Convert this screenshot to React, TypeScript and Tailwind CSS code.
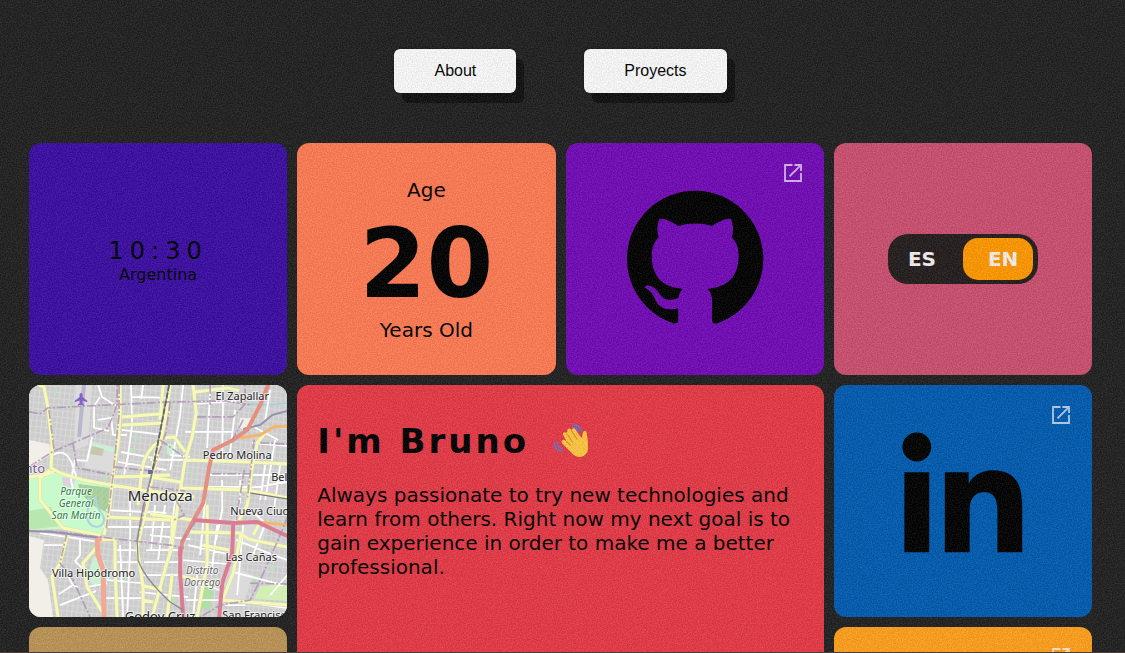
import type { ReactNode } from "react";
import { BiLogoGithub, BiLogoLinkedin } from "react-icons/bi";

function OpenIcon() {
  return (
    <svg
      aria-hidden="true"
      viewBox="0 0 18 18"
      className="absolute top-[21px] right-[22px] size-[18px] opacity-70"
      fill="none"
      stroke="#fff"
      strokeWidth="1.8"
    >
      <path d="M8.5 1H1v16h16V9M10.5 1H17v6M16.6 1.4L5.5 12.3" />
    </svg>
  );
}

function Card({ className, children }: { className: string; children?: ReactNode }) {
  return <section className={`relative overflow-hidden rounded-xl ${className}`}>{children}</section>;
}

function Grain() {
  return (
    <svg aria-hidden="true" className="pointer-events-none absolute inset-0 size-full opacity-[0.07]">
      <filter id="grain" x="0" y="0" width="100%" height="100%" colorInterpolationFilters="sRGB">
        <feTurbulence type="fractalNoise" baseFrequency="0.8" numOctaves="3" stitchTiles="stitch" />
        <feColorMatrix values="2.6 0 0 0 -0.85  2.6 0 0 0 -0.85  2.6 0 0 0 -0.85  0 0 0 0 1" />
      </filter>
      <rect width="100%" height="100%" filter="url(#grain)" />
    </svg>
  );
}

function WavingHand() {
  return (
    <svg role="img" aria-label="Waving hand" viewBox="0 0 36 36" className="size-9">
      <path
        d="M20.500 1.500q6 .2 8 7.500M20 4.200q4 .2 5.400 4.600M1.200 19.500q.3 7.500 7.600 8.600M4 20q.5 4.600 5.300 5.400"
        fill="none"
        stroke="#4a82ee"
        strokeWidth="1.3"
        strokeLinecap="round"
      />
      <path
        d="M9 17.500c1-1.300 2.600-1 3.400 0l1.400 1.400-3.600-6.800c-1.100-2.300 1.600-3.900 3-2L14.500 8c-.9-2.300 2-3.600 3.300-1.600l1 1.500c-.8-2.400 2.300-3.700 3.500-1.600l4.800 7 2.100 1.800c.1-2.200.1-4.400.9-5.900.8-1.700 3.300-1.300 3.600.5.3 2.500.6 4.500 1.100 7.800l.2 8.300c-.1 4.600-4.200 8.600-9 8.200-3.200-.2-5.200-1.800-7.500-4.200l-9.200-9.400c-.7-1-.9-2-.3-2.900z"
        fill="#fdc840"
      />
      <path
        d="M13.800 18.800l3.600 3.600M13.800 10.800l6 8.400M18.600 8l5.300 7.900"
        fill="none"
        stroke="#e09320"
        strokeWidth="1.100"
        strokeLinecap="round"
      />
    </svg>
  );
}

const whiteStreets = [
  "M98 385l4 12 16 10M100 397l-6 9v22l15 3M98 420l13-2 2 17h14M92 437l-5 24-12-1",
  "M53 455q14-8 20 12l4 12M75 460l-4 20 3 14M131 385l1 40-4 30-4 20M122 430l40 5M121 452l42 8M118 462l48 8",
  "M183 385l-3 30-10 55M210 388l-3 60M223 385l-1 75M235 410l-6 50M185 432h48M170 455l20 2M196 404l40-3",
  "M150 460h35M222 480v30l-6 30M207 487h40M240 480v20l-5 22M210 475h74M265 465l-5 35M275 440l-10 60M280 465l-7 50",
  "M155 505l-4 45M165 505l-7 55M175 500l-7 60M150 535l40 4M146 550h34M144 562h36M142 575h36M140 592l48 5",
  "M115 550h24M117 562h20M120 545l3 72M130 500v50l-3 67M106 510l60 3M103 527h68M107 580l36 3M105 598h38M87 587l20-4",
  "M40 533l35 5 24 4M80 540v15l-5 6 8 8M63 567l10 18 5 2M73 585l-14 9M60 605l36-14M44 545h23",
  "M188 545l44 10M183 560l46 4M205 500l-5 55M217 525l-6 50M243 525l-6 70M236 540l30 12 21 8M233 572l50 13M250 510l14 12",
  "M190 580l30 10M186 600h34M197 575l-4 42M245 602l42 6M270 595l17-20M265 524l-12 30M225 605h20",
  "M132 397l35 1M143 385l-2 14M270 390l-5 30M248 424l30 16M252 443l35 3M287 482l-38 6",
];

const yellowRoads = [
  "M36 384l8 3 4 21 4 35-1 25 9 5 23 7 27 5 20 3 38 7",
  "M120 385v28l-2 30-5 30-3 32-6 30",
  "M122 417l48-4M122 425l42-2M112 477l58-2",
  "M163 385l-3 35M170 437q-16 0-18 40l-5 28-10 42 6 40v30",
  "M157 443q-15 12-16 34l-3 28",
  "M170 385l-5 35-11 50",
  "M193 385l3 28-4 24-7 23-8 50-6 40-5 15-14 52",
  "M195 392l32-4 12 3M165 438l9-1 11 15M185 460l65 2 37 2",
  "M150 477l30 5M180 488l67 2 40 8M150 491l44 6",
  "M265 433l-8 10-5 24-5 38-8 15",
  "M108 517l62 3M150 514l43 6M29 477l15-2 10-3M50 470l-10 8v22l23 28 37 7",
  "M68 533l-8 30-8 14 6 40M97 547l-14 16 4 24 16 26M98 540l17-1v30l2 48",
  "M190 532l50 1 8 6 39 8M202 545l27 5M207 505v58l-10 54M241 533l-8 40-14 35",
  "M172 517v20M180 576l36 8M144 586l18 4M142 600l11 2M222 600l65 5M172 575l-5 42",
  "M260 522l-7 13",
];

const boundaries = [
  "M29 412l11 2 8-6 122-6 55-1 25 4",
  "M29 467l23-15 21-9 35-15 9-23v-20",
  "M73 443l4 25 35 7M114 467l46 5M150 487l35 4",
  "M49 410l5 40M119 385v30l-6 60-7 55M210 385v20M197 417h36l12-13v-19M243 420l-11 20M160 440l25 18",
  "M29 531h24l47 6 70 8 14 3M67 533l-7 30 13 17 17 37",
  "M176 500l8 15-10 5M195 522l-15 21M212 474h40M244 470l-8 50M254 440l-7 60M260 443l27 1",
  "M288 515l-8 20-20 45-10 20-30 5-20 12M250 583l37 1M170 402l-4 30-14 40-15 70",
];

function Roads({ paths, color, width }: { paths: string[]; color: string; width: number }) {
  return <path d={paths.join("")} fill="none" stroke={color} strokeWidth={width} strokeLinejoin="round" />;
}

function CityMap() {
  return (
    <svg
      role="img"
      aria-label="Map of Mendoza"
      viewBox="29 385 258 232"
      preserveAspectRatio="xMidYMid slice"
      className="absolute inset-0 size-full"
    >
      <defs>
        <pattern id="blocks" width="5" height="6" patternUnits="userSpaceOnUse" patternTransform="rotate(6)">
          <rect width="5" height="6" fill="#cdcccc" />
          <path d="M0 .5h5M.5 0v6" stroke="#dad9d9" />
        </pattern>
        <pattern id="woods" width="6" height="6" patternUnits="userSpaceOnUse">
          <rect width="6" height="6" fill="#add19e" />
          <path d="M1 1h1M4 3h1M2 5h1" stroke="#8fbf85" />
        </pattern>
      </defs>
      <path d="M29 385h258v232H29z" fill="url(#blocks)" />
      <path d="M29 440l20 4 3 10-23 14zM29 536l15 4-4 28 8 12 5 37H29zM240 418h16l-12 12-6-3z" fill="#f2efe9" />
      <path d="M76 385h16l-4 60-14 5zM91 441l27 7-4 25-30-6z" fill="#dddcdd" />
      <path d="M29 478l14-3 17-3 52 13-3 22-7 28-40-6-33 1z" fill="#c8facc" />
      <path d="M78 484l33 4-3 25-14-7-13-12z" fill="url(#woods)" />
      <path d="M29 511l22-4 9 19-31 4z" fill="#b8e8b0" />
      <path d="M91 443l26 6v4l-27-6zM166 443l10 2 3 12-12-3zM94 556l10 5 5 19-16 6-6-10z" fill="#c8f2d1" />
      <path d="M92 446l12 3-2 7-12-2z" fill="#c8c7ad" />
      <path d="M62 477l14 2-5 9-8-3zM151 459l10 2-2 17h-9zM256 481l20 9-2 9-20-3z" fill="#ddd1df" />
      <path d="M260 586l27-2v17l-33-2z" fill="#d3efb5" />
      <path d="M204 587l9 2-3 21-9-2z" fill="#aedfa3" />
      <path d="M246 522l20 7-5 19-27-5zM231 566l22 9-8 24-22 1z" fill="#dcdbdc" />
      <path
        d="M54 391h3M72 407h2M103 479h3M130 450h4M136 438h3M178 425h2M190 472h3M205 482h4M252 475h3M90 547h4M125 580h4M170 600h6M163 520h6M252 578h6M270 569h4"
        stroke="#b6e6b8"
        strokeWidth="4"
      />
      <path d="M84 385l-5 52" stroke="#b9b8cb" strokeWidth="4" />
      <path
        d="M89 497c1 10-6 21 2 28 10 5 16-3 11-11-4-6-7-10-6-18"
        fill="none"
        stroke="#aad3df"
        strokeWidth="2"
      />
      <path d="M247 404l20 1 20-2" stroke="#9fd0dc" fill="none" strokeWidth="1.500" />
      <Roads paths={whiteStreets} color="#ffffff" width={1.8} />
      <Roads paths={yellowRoads} color="#d8dca0" width={3.8} />
      <Roads paths={yellowRoads} color="#f6f9ba" width={3} />
      <Roads paths={["M240 438l20-3 13-8 14-1M257 522l30 3"]} color="#f3b66f" width={3} />
      <Roads paths={["M243 429l17-4 12-10 15-4", "M29 531l24 1 47 6"]} color="#9492ae" width={2} />
      <Roads
        paths={["M268 385l-8 20-13 25-14 10-20 10-4 17-6 36-10 18-11 21-2 14"]}
        color="#e58f80"
        width={4}
      />
      <Roads paths={["M101 538l-4 3 1 14 5 15 1 47"]} color="#f3a795" width={5} />
      <Roads
        paths={["M180 548v25l3 44M193 520l40 3 24-1 30 14M233 523l-1 30-10 30-3 34"]}
        color="#dc7c92"
        width={4}
      />
      <path
        d={boundaries.join("")}
        fill="none"
        stroke="#ab8bb0"
        strokeWidth="1.700"
        strokeDasharray="9 2 2 2"
        opacity="0.75"
      />
      <path d="M169 385l-17 88-9 34-6 33 1 20q6 18 32 42l13 8" fill="none" stroke="#8a8990" strokeWidth="1.300" />
      <path d="M169 385l-17 88" stroke="#66656b" strokeWidth="1.800" strokeDasharray="6 2" />
      <path d="M250 493l37 6" stroke="#77767c" strokeWidth="1.200" />
      <path d="M148 470h4v4h-4z" fill="#6467a8" />
      <path
        d="M81 393c1.200 0 1.500 1 1.500 2v2.200l4.700 3.600v1.500l-4.700-1.600v2.600l1.700 1.300v1.100l-3.200-.8-3.200.8v-1.100l1.700-1.300v-2.600l-4.700 1.600v-1.500l4.700-3.600V395c0-1 .3-2 1.500-2z"
        fill="#8461c4"
      />
      <g
        fontFamily="'Noto Sans', sans-serif"
        fontSize="11"
        fill="#222"
        stroke="#fff"
        strokeOpacity="0.65"
        strokeWidth="2"
        strokeLinejoin="round"
        paintOrder="stroke"
        textAnchor="middle"
      >
        <text x="242" y="400">El Zapallar</text>
        <text x="237" y="459">Pedro Molina</text>
        <text x="271" y="481" textAnchor="start">Bel</text>
        <text x="160" y="501" fontSize="15">Mendoza</text>
        <text x="230" y="515" textAnchor="start">Nueva Ciud</text>
        <text x="251" y="561">Las Cañas</text>
        <text x="93.500" y="577">Villa Hipódromo</text>
        <text x="160" y="621" fontSize="13">Godoy Cruz</text>
        <text x="222" y="619" textAnchor="start">San Francisc</text>
        <text x="45" y="473" fontSize="13" fill="#7d5a92" textAnchor="end">nto</text>
        <g fontStyle="italic" fontSize="10" fill="#666">
          <text x="202" y="574">Distrito</text>
          <text x="202" y="586">Dorrego</text>
        </g>
        <g fontStyle="italic" fontSize="10" fill="#278043">
          <text x="76" y="495">Parque</text>
          <text x="76" y="507">General</text>
          <text x="76" y="519">San Martín</text>
        </g>
      </g>
    </svg>
  );
}

const navButton =
  "rounded-md bg-[#fbfbfb] px-10 py-[10px] font-['Liberation_Sans',Arial,sans-serif] text-base leading-6 text-black shadow-[0_0_3px_#111,8px_10px_0_#0f0f0f]";

export default function App() {
  return (
    <main className="relative h-screen overflow-hidden border-b border-[#4a3d38] bg-[#202020] pr-[33px] pl-[29px] font-['DejaVu_Sans',Verdana,sans-serif] text-black">
      <nav className="flex justify-center gap-[68px] pt-[49px] pb-[50px]">
        <button type="button" className={navButton}>About</button>
        <button type="button" className={navButton}>Proyects</button>
      </nav>

      <div className="grid auto-rows-[232px] grid-cols-4 gap-[10px]">
        <Card className="flex flex-col items-center justify-center bg-[#3a0ca3] pt-[3px]">
          <time className="text-2xl leading-7 tracking-[0.25em]">10:30</time>
          <p className="text-base leading-5">Argentina</p>
        </Card>

        <Card className="flex flex-col items-center justify-center bg-[#ff7b54] pt-px text-xl leading-6">
          <p>Age</p>
          <p className="mt-2 text-8xl leading-[108px] font-bold">20</p>
          <p>Years Old</p>
        </Card>

        <Card className="bg-[#7209b7]">
          <a href="#github" aria-label="GitHub" className="flex h-full items-center justify-center">
            <BiLogoGithub className="size-[164px]" />
            <OpenIcon />
          </a>
        </Card>

        <Card className="flex items-center justify-center bg-[#ca4f6f]">
          <button
            type="button"
            role="switch"
            aria-checked="true"
            aria-label="Language"
            className="flex h-[50px] w-[150px] items-center rounded-[20px] bg-[#231c1c] pr-[5px] text-left text-xl font-bold text-[#f6f0f0]"
          >
            <span className="w-[75px] pl-5">ES</span>
            <span className="flex h-[42px] flex-1 items-center rounded-[15px] bg-[#ff9800] pl-[25px]">EN</span>
          </button>
        </Card>

        <Card className="z-10 bg-[#dddddd]">
          <CityMap />
        </Card>

        <Card className="col-span-2 row-span-2 bg-[#e63946] px-5 pt-[34px]">
          <h1 className="flex items-center gap-6 text-[34px] leading-[44px] font-bold tracking-[3px]">
            I'm Bruno
            <WavingHand />
          </h1>
          <p className="mt-5 text-xl leading-6">
            Always passionate to try new technologies and learn from others. Right now my next goal is to gain
            experience in order to make me a better professional.
          </p>
        </Card>

        <Card className="bg-[#005bb0]">
          <a href="#linkedin" aria-label="LinkedIn" className="flex h-full items-center justify-center pb-4">
            <BiLogoLinkedin className="size-[158px]" />
            <OpenIcon />
          </a>
        </Card>

        <Card className="bg-[#bc9456]" />

        <Card className="bg-[#ff9f1c]">
          <a href="#contact" aria-label="Contact" className="block h-full">
            <OpenIcon />
          </a>
        </Card>
      </div>
      <Grain />
    </main>
  );
}
